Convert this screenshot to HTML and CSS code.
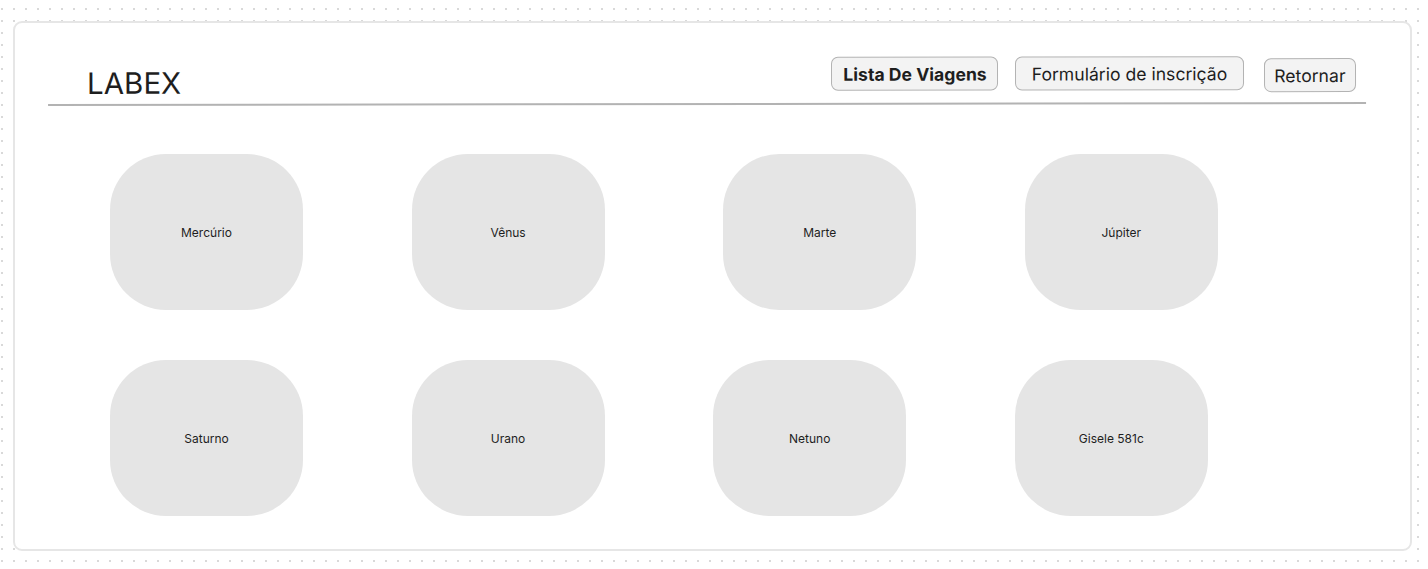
FILE: index.html
```html
<!DOCTYPE html>
<html lang="pt">
<head>
<meta charset="utf-8">
<title>LABEX</title>
<link rel="stylesheet" href="styles.css">
</head>
<body>
  <main class="frame">
    <header class="topbar">
      <h1 class="logo">LABEX</h1>
      <nav class="nav">
        <button class="btn btn-bold">Lista De Viagens</button>
        <button class="btn btn-form">Formulário de inscrição</button>
        <button class="btn btn-back">Retornar</button>
      </nav>
    </header>
    <section class="planets">
      <div class="row">
        <div class="card">Mercúrio</div>
        <div class="card">Vênus</div>
        <div class="card card-shift">Marte</div>
        <div class="card">Júpiter</div>
      </div>
      <div class="row">
        <div class="card">Saturno</div>
        <div class="card">Urano</div>
        <div class="card">Netuno</div>
        <div class="card">Gisele 581c</div>
      </div>
    </section>
  </main>
</body>
</html>
```

FILE: styles.css
```css
* { box-sizing: border-box; }

html, body {
  margin: 0;
  height: 100%;
}

body {
  padding: 21px 16px 0 13px;
  background-color: #ffffff;
  background-image: radial-gradient(circle at center, #d8d8d8 0.7px, transparent 1.2px);
  background-size: 12px 12px;
  background-position: -4px 3px;
  font-family: Inter, "Noto Sans", sans-serif;
  color: #1e1e1e;
  overflow: hidden;
}

.frame {
  width: 1399px;
  height: 530px;
  background: #ffffff;
  border: 2px solid #e6e6e6;
  border-radius: 9px;
}

.topbar {
  display: flex;
  align-items: flex-start;
  height: 82px;
  margin: 0 44px 0 33px;
  border-bottom: 2px solid #b3b3b3;
  transform: rotate(-0.085deg);
}

.logo {
  margin: 41px 0 0 39px;
  font-size: 29.5px;
  line-height: 36px;
  font-weight: 400;
  letter-spacing: 0;
  color: #1e1e1e;
}

.nav {
  display: flex;
  align-items: flex-start;
  margin-left: auto;
  margin-right: 10px;
  margin-top: 34px;
}

.btn {
  height: 34px;
  padding: 0 11.5px;
  font-family: Inter, "Noto Sans", sans-serif;
  font-size: 17.6px;
  color: #1e1e1e;
  background: #f3f3f3;
  border: 1.5px solid #b3b3b3;
  border-radius: 7px;
  white-space: nowrap;
}

.btn-bold {
  font-weight: 700;
  padding: 0 10.5px 0 11.5px;
}

.btn-form {
  margin-left: 17px;
  padding: 0 15.5px;
}

.btn-back {
  margin-left: 20px;
  margin-top: 2px;
  padding: 0 9.5px;
}

.planets {
  display: flex;
  flex-direction: column;
  gap: 50px;
  padding: 49px 0 0 95px;
}

.row {
  display: flex;
  gap: 108.6px;
}

.card {
  width: 193px;
  height: 156px;
  display: flex;
  align-items: center;
  justify-content: center;
  background: #e5e5e5;
  border-radius: 56px;
  font-size: 12px;
  color: #1e1e1e;
}

.card-shift { margin-left: 10px; }
```
